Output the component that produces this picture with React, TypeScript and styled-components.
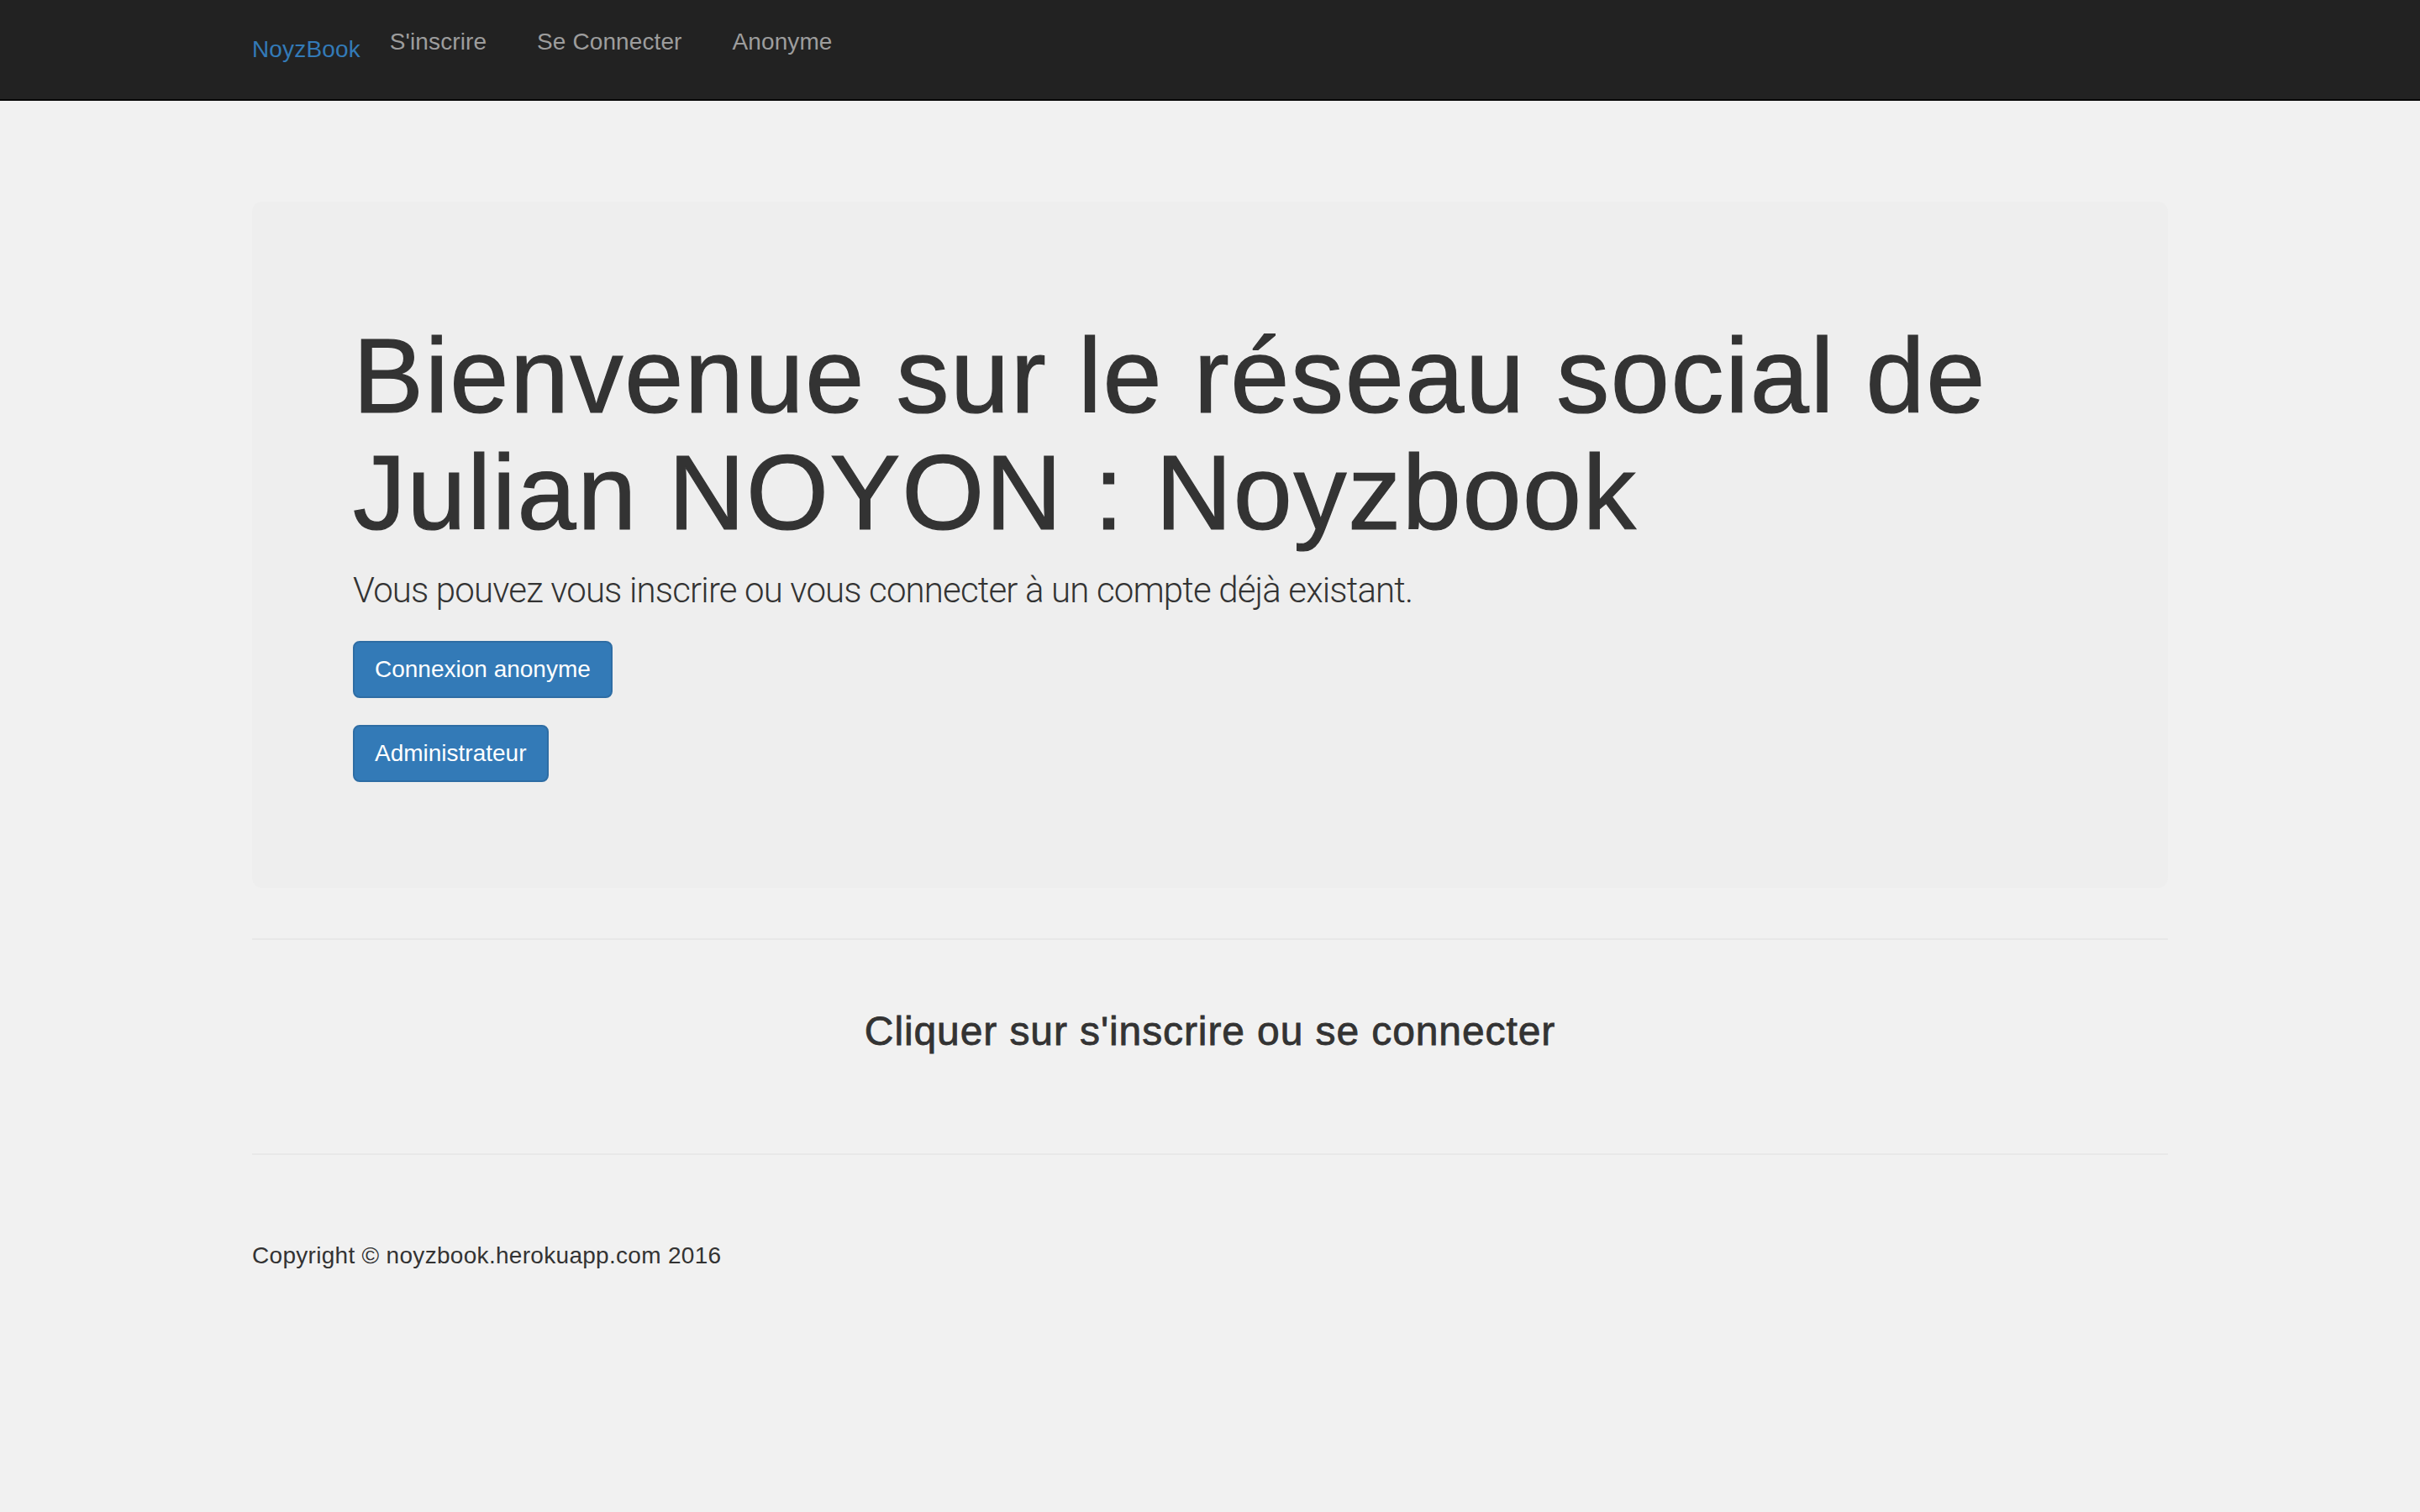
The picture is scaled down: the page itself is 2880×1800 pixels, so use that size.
import React from "react";
import styled, { createGlobalStyle } from "styled-components";

const GlobalStyle = createGlobalStyle`
  html, body {
    margin: 0;
    padding: 0;
    background: #f1f1f1;
  }
  body {
    font-family: "Liberation Sans", Arial, Helvetica, sans-serif;
    color: #333333;
    font-size: 28px;
    line-height: 40px;
  }
  * { box-sizing: border-box; }
`;

const Navbar = styled.nav`
  height: 120px;
  background: #222222;
  border-bottom: 2px solid #080808;
`;

const Container = styled.div`
  width: 2340px;
  margin: 0 auto;
  padding: 0 30px;
`;

const NavInner = styled(Container)`
  display: flex;
  align-items: flex-start;
`;

const Brand = styled.a`
  display: block;
  padding: 39px 5px 0 0;
  font-size: 28px;
  line-height: 40px;
  letter-spacing: 0.15px;
  color: #337ab7;
  text-decoration: none;
`;

const NavList = styled.ul`
  display: flex;
  list-style: none;
  margin: 0;
  padding: 0;
`;

const NavLink = styled.a`
  display: block;
  padding: 30px 30px;
  font-size: 28px;
  line-height: 40px;
  letter-spacing: 0.1px;
  color: #9d9d9d;
  text-decoration: none;
`;

const Main = styled(Container)`
  padding-top: 120px;
`;

const Jumbotron = styled.section`
  background: #eeeeee;
  border-radius: 12px;
  padding: 96px 120px;
  margin-bottom: 60px;
`;

const Title = styled.h1`
  margin: 43px 0 17px;
  font-size: 126px;
  line-height: 1.1;
  font-weight: 400;
  letter-spacing: 1.6px;
  -webkit-text-stroke: 1.2px #333333;
  color: #333333;
`;

const Lead = styled.p`
  margin: 0 0 30px;
  font-family: Roboto, "Liberation Sans", sans-serif;
  font-weight: 300;
  font-size: 42px;
  line-height: 60px;
  letter-spacing: -0.85px;
  color: #333333;
`;

const ButtonStack = styled.div`
  display: flex;
  flex-direction: column;
  align-items: flex-start;
  gap: 32px;
  margin-bottom: 30px;
`;

const Button = styled.a`
  display: inline-block;
  padding: 12px 24px;
  font-size: 28px;
  line-height: 40px;
  color: #ffffff;
  background: #337ab7;
  border: 2px solid #2e6da4;
  border-radius: 8px;
  text-decoration: none;
  white-space: nowrap;
`;

const Rule = styled.hr<{ $top?: number }>`
  margin: ${(p) => p.$top ?? 40}px 0 40px;
  border: 0;
  border-top: 2px solid #e8e8e8;
  height: 0;
`;

const Callout = styled.h3`
  margin: 83px 0 0;
  font-size: 48px;
  line-height: 1.1;
  font-weight: 400;
  letter-spacing: 0.9px;
  -webkit-text-stroke: 0.8px #333333;
  text-align: center;
  color: #333333;
`;

const Footer = styled.footer`
  padding-top: 60px;
  padding-bottom: 200px;
`;

const Copyright = styled.p`
  margin: 0;
  font-size: 28px;
  line-height: 40px;
  letter-spacing: 0.3px;
  color: #333333;
`;

export default function App() {
  return (
    <>
      <GlobalStyle />
      <Navbar>
        <NavInner>
          <Brand href="#">NoyzBook</Brand>
          <NavList>
            <li><NavLink href="#">S'inscrire</NavLink></li>
            <li><NavLink href="#">Se Connecter</NavLink></li>
            <li><NavLink href="#">Anonyme</NavLink></li>
          </NavList>
        </NavInner>
      </Navbar>
      <Main>
        <Jumbotron>
          <Title>Bienvenue sur le réseau social de Julian NOYON : Noyzbook</Title>
          <Lead>Vous pouvez vous inscrire ou vous connecter à un compte déjà existant.</Lead>
          <ButtonStack>
            <Button href="#">Connexion anonyme</Button>
            <Button href="#">Administrateur</Button>
          </ButtonStack>
        </Jumbotron>
        <Rule $top={0} />
        <Callout>Cliquer sur s'inscrire ou se connecter</Callout>
        <Rule $top={118} />
        <Footer>
          <Copyright>Copyright © noyzbook.herokuapp.com 2016</Copyright>
        </Footer>
      </Main>
    </>
  );
}
